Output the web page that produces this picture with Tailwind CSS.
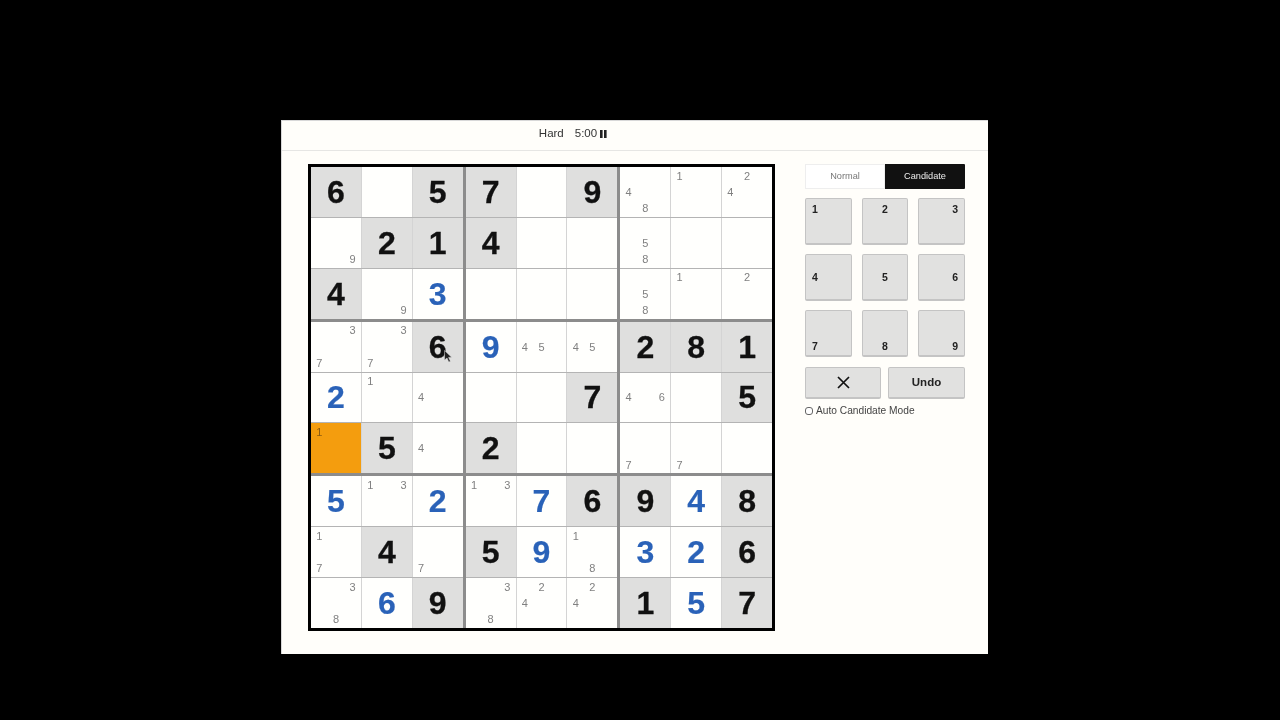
<!DOCTYPE html>
<html lang="en">
<head>
    <meta charset="UTF-8">
    <title>Sudoku - Hard</title>
    <script src="https://cdn.jsdelivr.net/npm/@tailwindcss/browser@4"></script>
</head>
<body class="bg-black min-h-screen pt-[120px] pl-[281px] font-['Liberation_Sans',Arial,sans-serif]">
    <div class="relative w-[707px] h-[534px] bg-[#fffefa] border-l border-t border-[#d8d8d8] will-change-transform">
        <!-- cabecera -->
        <div class="h-[30px] border-b border-[#e6e6e4] flex items-center justify-center gap-[11px] pr-[124px] pb-[3px] text-[11.5px] text-[#333]">
            <span>Hard</span>
            <span class="flex items-center gap-[3px]">
                5:00
                <svg width="7" height="8" viewBox="0 0 7 8"><rect x="0" y="0" width="2.6" height="8" fill="#222"/><rect x="4" y="0" width="2.6" height="8" fill="#222"/></svg>
            </span>
        </div>

        <div class="flex pl-[26px] pt-[13px]">
            <!-- tablero -->
            <div id="tablero" class="w-[467px] h-[467px] shrink-0 border-[3px] border-black bg-[#8c8c8c] grid grid-cols-3 grid-rows-3 gap-[3px]"></div>

            <!-- controles -->
            <div class="w-[160px] ml-[30px]">
                <div class="flex h-[25px] text-[9.2px]">
                    <div class="w-[80px] flex items-center justify-center bg-white border border-[#eeeeee] text-[#777]">Normal</div>
                    <div class="w-[80px] flex items-center justify-center bg-[#111] text-[#eee] rounded-r-[1px]">Candidate</div>
                </div>
                <div class="grid grid-cols-3 gap-x-[10px] gap-y-[9px] mt-[9px]">
                    <button class="h-[47px] flex items-start justify-start px-[6px] pt-[5px] text-[10.5px] leading-none font-bold text-[#222] bg-[#e1e1e0] border border-[#c4c4c4] border-b-2 rounded-[2px]">1</button>
                    <button class="h-[47px] flex items-start justify-center px-[6px] pt-[5px] text-[10.5px] leading-none font-bold text-[#222] bg-[#e1e1e0] border border-[#c4c4c4] border-b-2 rounded-[2px]">2</button>
                    <button class="h-[47px] flex items-start justify-end px-[6px] pt-[5px] text-[10.5px] leading-none font-bold text-[#222] bg-[#e1e1e0] border border-[#c4c4c4] border-b-2 rounded-[2px]">3</button>
                    <button class="h-[47px] flex items-center justify-start px-[6px] text-[10.5px] leading-none font-bold text-[#222] bg-[#e1e1e0] border border-[#c4c4c4] border-b-2 rounded-[2px]">4</button>
                    <button class="h-[47px] flex items-center justify-center px-[6px] text-[10.5px] leading-none font-bold text-[#222] bg-[#e1e1e0] border border-[#c4c4c4] border-b-2 rounded-[2px]">5</button>
                    <button class="h-[47px] flex items-center justify-end px-[6px] text-[10.5px] leading-none font-bold text-[#222] bg-[#e1e1e0] border border-[#c4c4c4] border-b-2 rounded-[2px]">6</button>
                    <button class="h-[47px] flex items-end justify-start px-[6px] pb-[4px] text-[10.5px] leading-none font-bold text-[#222] bg-[#e1e1e0] border border-[#c4c4c4] border-b-2 rounded-[2px]">7</button>
                    <button class="h-[47px] flex items-end justify-center px-[6px] pb-[4px] text-[10.5px] leading-none font-bold text-[#222] bg-[#e1e1e0] border border-[#c4c4c4] border-b-2 rounded-[2px]">8</button>
                    <button class="h-[47px] flex items-end justify-end px-[6px] pb-[4px] text-[10.5px] leading-none font-bold text-[#222] bg-[#e1e1e0] border border-[#c4c4c4] border-b-2 rounded-[2px]">9</button>
                </div>
                <div class="flex gap-[7px] mt-[10px]">
                    <button class="w-[76px] h-[32px] flex items-center justify-center bg-[#e1e1e0] border border-[#c4c4c4] border-b-2 rounded-[2px]">
                        <svg width="13" height="13" viewBox="0 0 13 13"><path d="M1 1 L12 12 M12 1 L1 12" stroke="#111" stroke-width="1.7" fill="none"/></svg>
                    </button>
                    <button class="w-[77px] h-[32px] flex items-center justify-center text-[11.5px] font-bold text-[#222] bg-[#e1e1e0] border border-[#c4c4c4] border-b-2 rounded-[2px]">Undo</button>
                </div>
                <label class="flex items-center gap-[3px] mt-[4px] text-[10.2px] text-[#444]">
                    <span class="w-[8px] h-[8px] rounded-[3px] border border-[#666] bg-white"></span>
                    Auto Candidate Mode
                </label>
            </div>
        </div>

        <!-- puntero del raton -->
        <svg class="absolute left-[162px] top-[229px]" width="9" height="13" viewBox="0 0 9 13"><path d="M0.5 0.5 L0.5 10 L3 8 L4.8 12 L6.4 11.3 L4.6 7.4 L7.6 7.2 Z" fill="#222" stroke="#ddd" stroke-width="0.5"/></svg>
    </div>

    <script>
        // g = fija (gris), b = azul, c = candidatos, o = celda activa
        const filas = [
            ["g6","","g5","g7","","g9","c48","c1","c24"],
            ["c9","g2","g1","g4","","","c58","",""],
            ["g4","c9","b3","","","","c58","c1","c2"],
            ["c37","c37","g6","b9","c45","c45","g2","g8","g1"],
            ["b2","c1","c4","","","g7","c46","","g5"],
            ["o1","g5","c4","g2","","","c7","c7",""],
            ["b5","c13","b2","c13","b7","g6","g9","b4","g8"],
            ["c17","g4","c7","g5","b9","c18","b3","b2","g6"],
            ["c38","b6","g9","c38","c24","c24","g1","b5","g7"]
        ];

        function notas(lista, color) {
            let html = '<div class="w-full h-full pt-[1px] grid grid-cols-3 grid-rows-3 text-[11px] leading-none ' + color + '">';
            for (let n = 1; n <= 9; n++) {
                html += '<span class="flex items-center justify-center">' + (lista.includes(n) ? n : "") + '</span>';
            }
            return html + '</div>';
        }

        function celda(v) {
            const tipo = v[0], resto = v.slice(1);
            if (tipo === "g") return '<div class="flex items-center justify-center bg-[#dfdfde] text-[32px] font-bold text-[#111] [-webkit-text-stroke:0.3px_#111]">' + resto + '</div>';
            if (tipo === "b") return '<div class="flex items-center justify-center bg-[#fffffd] text-[32px] font-bold text-[#2a62b8] [-webkit-text-stroke:0.2px_#2a62b8]">' + resto + '</div>';
            if (tipo === "c") return '<div class="bg-[#fffffd]">' + notas(resto, "text-[#808080]") + '</div>';
            if (tipo === "o") return '<div class="bg-[#f49d0e]">' + notas(resto, "text-[#8a5a10]") + '</div>';
            return '<div class="bg-[#fffffd]"></div>';
        }

        let html = "";
        for (let bf = 0; bf < 3; bf++) {
            for (let bc = 0; bc < 3; bc++) {
                html += '<div class="grid grid-rows-3 gap-y-[1px] bg-[#b4b4b4]">';
                for (let f = 0; f < 3; f++) {
                    html += '<div class="grid grid-cols-3 gap-x-[1px] bg-[#d4d4d4]">';
                    for (let c = 0; c < 3; c++) {
                        html += celda(filas[bf * 3 + f][bc * 3 + c]);
                    }
                    html += '</div>';
                }
                html += '</div>';
            }
        }
        document.getElementById("tablero").innerHTML = html;
    </script>
</body>
</html>
